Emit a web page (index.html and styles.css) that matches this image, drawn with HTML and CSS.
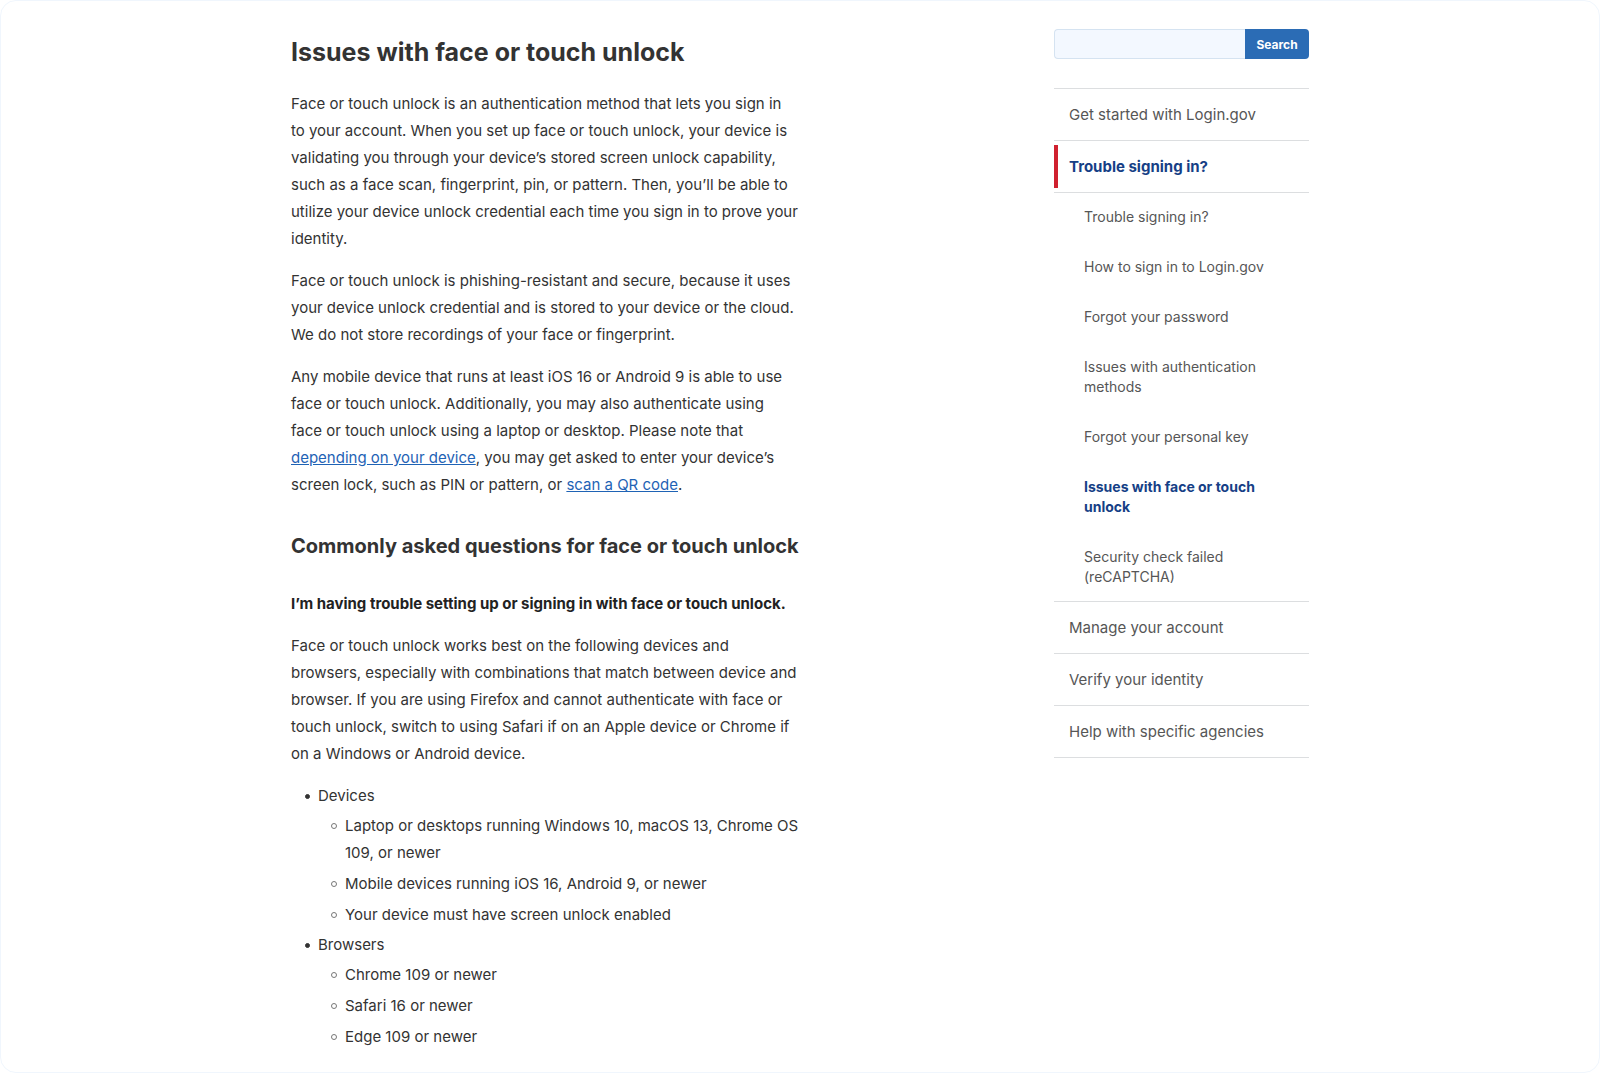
FILE: index.html
```html
<!DOCTYPE html>
<html lang="en">
<head>
<meta charset="utf-8">
<meta name="viewport" content="width=device-width, initial-scale=1">
<title>Issues with face or touch unlock | Login.gov</title>
<link rel="stylesheet" href="styles.css">
</head>
<body>
<div class="page">
  <div class="layout">
    <main class="content">
      <h1>Issues with face or touch unlock</h1>
      <p>Face or touch unlock is an authentication method that lets you sign in<br> to your account. When you set up face or touch unlock, your device is<br> validating you through your device’s stored screen unlock capability,<br> such as a face scan, fingerprint, pin, or pattern. Then, you’ll be able to<br> utilize your device unlock credential each time you sign in to prove your<br> identity.</p>
      <p>Face or touch unlock is phishing-resistant and secure, because it uses<br> your device unlock credential and is stored to your device or the cloud.<br> We do not store recordings of your face or fingerprint.</p>
      <p>Any mobile device that runs at least iOS 16 or Android 9 is able to use<br> face or touch unlock. Additionally, you may also authenticate using<br> face or touch unlock using a laptop or desktop. Please note that<br> <a href="#device">depending on your device</a>, you may get asked to enter your device’s<br> screen lock, such as PIN or pattern, or <a href="#qr">scan a QR code</a>.</p>
      <h2>Commonly asked questions for face or touch unlock</h2>
      <h3>I’m having trouble setting up or signing in with face or touch unlock.</h3>
      <p>Face or touch unlock works best on the following devices and<br> browsers, especially with combinations that match between device and<br> browser. If you are using Firefox and cannot authenticate with face or<br> touch unlock, switch to using Safari if on an Apple device or Chrome if<br> on a Windows or Android device.</p>
      <ul class="topics">
        <li>Devices
          <ul class="details">
            <li>Laptop or desktops running Windows 10, macOS 13, Chrome OS<br> 109, or newer</li>
            <li>Mobile devices running iOS 16, Android 9, or newer</li>
            <li>Your device must have screen unlock enabled</li>
          </ul>
        </li>
        <li>Browsers
          <ul class="details">
            <li>Chrome 109 or newer</li>
            <li>Safari 16 or newer</li>
            <li>Edge 109 or newer</li>
          </ul>
        </li>
      </ul>
    </main>
    <aside class="sidebar">
      <form class="search" role="search">
        <input class="search-input" type="search" aria-label="Search help">
        <button class="search-button" type="submit">Search</button>
      </form>
      <nav aria-label="Help topics">
        <ul class="sidenav">
          <li><a href="#start">Get started with Login.gov</a></li>
          <li><a class="current" href="#signing-in">Trouble signing in?</a>
            <ul class="subnav">
              <li><a href="#trouble">Trouble signing in?</a></li>
              <li><a href="#how-to">How to sign in to Login.gov</a></li>
              <li><a href="#password">Forgot your password</a></li>
              <li><a href="#methods">Issues with authentication methods</a></li>
              <li><a href="#key">Forgot your personal key</a></li>
              <li><a class="active" href="#unlock" aria-current="page">Issues with face or touch unlock</a></li>
              <li><a href="#recaptcha">Security check failed (reCAPTCHA)</a></li>
            </ul>
          </li>
          <li><a href="#account">Manage your account</a></li>
          <li><a href="#verify">Verify your identity</a></li>
          <li><a href="#agencies">Help with specific agencies</a></li>
        </ul>
      </nav>
    </aside>
  </div>
</div>
</body>
</html>
```
FILE: styles.css
```css
*,
*::before { box-sizing: border-box; }

body {
  margin: 0;
  background: #fff;
  color: #333;
  font-family: Inter, "Liberation Sans", sans-serif;
  font-size: 15px;
  line-height: 27px;
}

.page {
  min-height: 100vh;
  padding: 28px 24px 20px;
  border: 1px solid #f0f6fd;
  border-radius: 16px;
}

.layout {
  display: grid;
  grid-template-columns: minmax(0, 1fr) 255px;
  gap: 48px;
  max-width: 1018px;
  margin: 0 auto;
}

.content h1,
.content h2,
.content h3 {
  font-weight: 700;
  white-space: nowrap;
}

.content h1 {
  margin: 7px 0 22px;
  font-size: 25px;
  line-height: 32px;
}

.content h2 {
  margin: 32px 0 28px;
  font-size: 20px;
  line-height: 32px;
}

.content h3 {
  margin: 0 0 15px;
  color: #222;
  font-size: 15px;
  line-height: 27px;
}

.content p { margin: 0 0 15px; }
.content a { color: #1f63b5; }

.topics,
.details {
  margin: 0;
  padding-left: 27px;
  list-style: none;
}

.topics li::before {
  content: "";
  display: inline-block;
  width: 5px;
  height: 5px;
  margin: 0 8px 0 -13px;
  border: 1px solid #333;
  border-radius: 50%;
  background: #333;
  vertical-align: 2px;
}

.topics .details li::before {
  width: 6px;
  height: 6px;
  margin-left: -14px;
  border-color: #777;
  background: transparent;
}

.topics > li + li { margin-top: 3px; }
.details { margin-top: 3px; }
.details > li + li { margin-top: 4px; }

.search {
  display: flex;
  height: 30px;
  margin-bottom: 29px;
}

.search-input {
  flex: 1;
  min-width: 0;
  padding: 0 8px;
  border: 1px solid #d5e3f1;
  border-right: 0;
  border-radius: 4px 0 0 4px;
  background: #f3f8ff;
  font: inherit;
}

.search-button {
  width: 64px;
  padding: 0;
  border: 0;
  border-radius: 0 4px 4px 0;
  background: #2b6cb5;
  color: #fff;
  font-family: inherit;
  font-size: 12px;
  font-weight: 700;
}

.sidenav,
.subnav {
  margin: 0;
  padding: 0;
  list-style: none;
}

.sidenav {
  border-bottom: 1px solid #dcdee0;
  line-height: 20px;
}

.sidenav > li { border-top: 1px solid #dcdee0; }

.sidenav a {
  display: block;
  color: #565656;
  text-decoration: none;
}

.sidenav > li > a { padding: 16px 15px 15px; }

.sidenav .current,
.sidenav .active {
  color: #163f86;
  font-weight: 700;
}

.sidenav > li > .current {
  margin: 4px 0;
  padding: 12px 11px 11px;
  border-left: 4px solid #d0212f;
}

.subnav {
  display: grid;
  gap: 2px;
  border-top: 1px solid #dcdee0;
  font-size: 14px;
}

.subnav a { padding: 14px 30px; }
```
